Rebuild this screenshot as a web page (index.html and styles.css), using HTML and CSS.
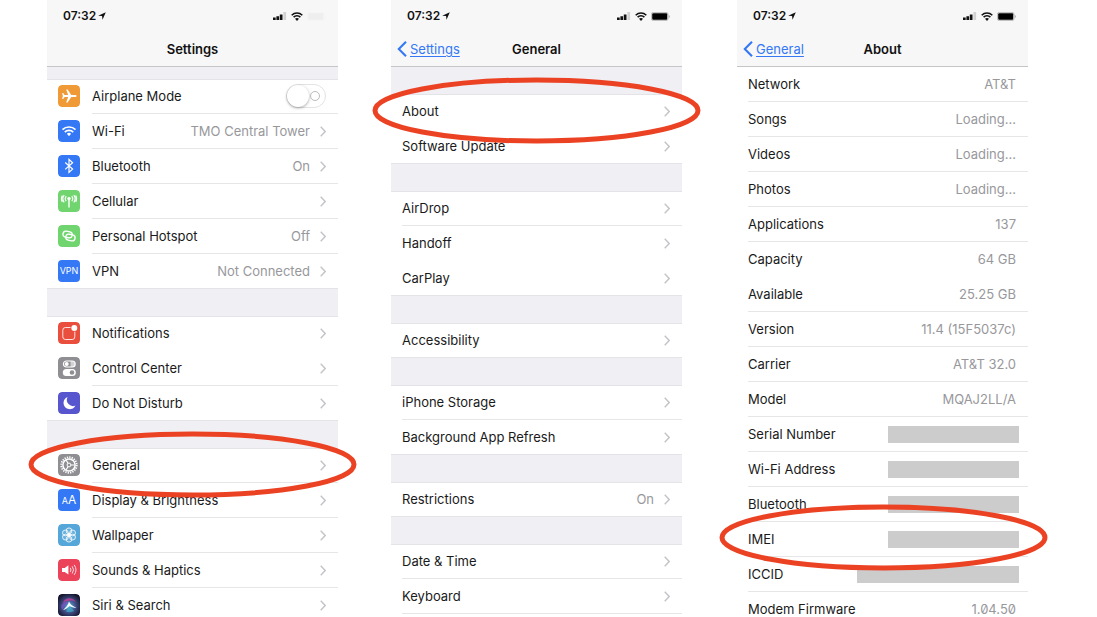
FILE: index.html
```html
<!DOCTYPE html>
<html lang="en">
<head>
<meta charset="utf-8">
<meta name="viewport" content="width=device-width, initial-scale=1">
<title>Settings – General – About</title>
<link rel="stylesheet" href="styles.css">
</head>
<body>
<svg class="defs" aria-hidden="true">
  <symbol id="chevron" viewBox="0 0 6 11"><path d="M.7.7 5.2 5.5.7 10.3" fill="none" stroke="#c4c4c8" stroke-width="1.4"/></symbol>
  <symbol id="back" viewBox="0 0 10 16"><path d="M9 .8 1.8 8 9 15.2" fill="none" stroke="#3478f6" stroke-width="2.1"/></symbol>
  <symbol id="arrow" viewBox="0 0 8 8"><path d="M7.8.3 4.5 7.7 4.1 4.1.2 3.8z" fill="#111"/></symbol>
  <symbol id="signal" viewBox="0 0 14 8"><path d="M0 5.5h2.7V8H0zM3.400 4.200h2.700V8H3.400zM6.800 2.400h2.700V8H6.800z" fill="#111"/><path d="M10.400 0h2.700v8h-2.700z" fill="#d2d2d2"/></symbol>
  <symbol id="wifi" viewBox="0 0 12 9"><path d="M.7 3.2a7.6 7.6 0 0 1 10.6 0M2.6 5.2a4.900 4.900 0 0 1 6.800 0" fill="none" stroke="currentColor" stroke-width="1.600"/><path d="M6 9 4 6.800a3 3 0 0 1 4 0z" fill="currentColor"/></symbol>
  <symbol id="battery" viewBox="0 0 19 9"><rect x=".4" y=".4" width="16.600" height="8.200" rx="2" fill="none" stroke="#aaa" stroke-width=".8"/><rect x="1.200" y="1.200" width="15" height="6.600" rx="1" fill="#000"/><path d="M17.800 3v3q1-.4 1-1.500t-1-1.500" fill="#aaa"/></symbol>
</svg>
<main class="screens">

  <section class="phone">
    <header class="bar">
      <div class="status">
        <span>07:32</span><svg class="i-arrow"><use href="#arrow"/></svg>
        <span class="indicators"><svg class="i-signal"><use href="#signal"/></svg><svg class="i-wifi"><use href="#wifi"/></svg><svg class="i-battery dim"><use href="#battery"/></svg></span>
      </div>
      <div class="nav"><h1>Settings</h1></div>
    </header>
    <div class="list">
      <div class="group first-short">
        <div class="row">
          <svg class="icon" viewBox="0 0 22 22"><rect width="22" height="22" rx="4" fill="#f09a37"/><path d="M18.600 11c0 .8-.8 1.100-1.800 1.100h-3.500L9.600 17.600H8.200l1.900-5.500H6.600l-1.400 1.800H4.100l.8-2.900-.8-2.900h1.100l1.400 1.800h3.500L8.200 4.400h1.400l3.700 5.500h3.500c1 0 1.800.3 1.800 1.100z" fill="#fff"/></svg>
          <div class="cell"><label for="airplane">Airplane Mode</label><input class="toggle" type="checkbox" id="airplane"></div>
        </div>
        <a class="row" href="#wifi-settings">
          <svg class="icon" viewBox="0 0 22 22"><rect width="22" height="22" rx="4" fill="#3478f6"/><path d="M4.500 9.700a9.200 9.200 0 0 1 13 0M6.800 12.100a6 6 0 0 1 8.400 0" fill="none" stroke="#fff" stroke-width="1.700"/><path d="m11 16.300-2.100-2.500a3 3 0 0 1 4.200 0z" fill="#fff"/></svg>
          <span class="cell"><span>Wi-Fi</span><span class="value">TMO Central Tower</span><svg class="chev"><use href="#chevron"/></svg></span>
        </a>
        <a class="row" href="#bluetooth">
          <svg class="icon" viewBox="0 0 22 22"><rect width="22" height="22" rx="4" fill="#3478f6"/><path d="m7.200 7.500 7.400 6.600-3.600 3.300V4.400l3.600 3.300-7.400 6.700" fill="none" stroke="#fff" stroke-width="1.200"/></svg>
          <span class="cell"><span>Bluetooth</span><span class="value">On</span><svg class="chev"><use href="#chevron"/></svg></span>
        </a>
        <a class="row" href="#cellular">
          <svg class="icon" viewBox="0 0 22 22"><rect width="22" height="22" rx="4" fill="#71d56f"/><g fill="none" stroke="#fff" stroke-width="1.100"><path d="M11 9.500v8" stroke-width="1.400"/><path d="M8.200 6.200a4 4 0 0 0 0 5M6.200 5a6.200 6.200 0 0 0 0 7.400M4.300 5.400a7 7 0 0 0 0 6.600M13.800 6.200a4 4 0 0 1 0 5M15.800 5a6.200 6.200 0 0 1 0 7.400M17.700 5.400a7 7 0 0 1 0 6.600"/></g><circle cx="11" cy="8.600" r="1.700" fill="#fff"/></svg>
          <span class="cell"><span>Cellular</span><span class="value"></span><svg class="chev"><use href="#chevron"/></svg></span>
        </a>
        <a class="row" href="#hotspot">
          <svg class="icon" viewBox="0 0 22 22"><rect width="22" height="22" rx="4" fill="#71d56f"/><g fill="none" stroke="#fff" stroke-width="1.300" transform="rotate(12 11 11)"><rect x="4.600" y="6.800" width="9.400" height="6" rx="3"/><rect x="8" y="9.200" width="9.400" height="6" rx="3"/></g></svg>
          <span class="cell"><span>Personal Hotspot</span><span class="value">Off</span><svg class="chev"><use href="#chevron"/></svg></span>
        </a>
        <a class="row" href="#vpn">
          <span class="icon tile-text vpn" aria-hidden="true">VPN</span>
          <span class="cell"><span>VPN</span><span class="value">Not Connected</span><svg class="chev"><use href="#chevron"/></svg></span>
        </a>
      </div>
      <div class="group">
        <a class="row faint" href="#notifications">
          <svg class="icon" viewBox="0 0 22 22"><rect width="22" height="22" rx="4" fill="#ea4e3d"/><rect x="4.800" y="5.500" width="12" height="12" rx="2.600" fill="none" stroke="#fff" stroke-opacity=".85"/><circle cx="16.300" cy="6" r="3.800" fill="#ea4e3d"/><circle cx="16.300" cy="6" r="3" fill="#fff"/></svg>
          <span class="cell"><span>Notifications</span><span class="value"></span><svg class="chev"><use href="#chevron"/></svg></span>
        </a>
        <a class="row" href="#control-center">
          <svg class="icon" viewBox="0 0 22 22"><rect width="22" height="22" rx="4" fill="#8e8e93"/><rect x="5.400" y="4" width="11.800" height="6" rx="3" fill="none" stroke="#fff" stroke-width="1.200"/><circle cx="8.700" cy="7" r="2" fill="#fff"/><path d="M12.500 4h1.700a3 3 0 0 1 0 6h-1.700z" fill="#fff" opacity=".6"/><rect x="4.800" y="12" width="13" height="7" rx="3.500" fill="#fff"/><circle cx="14" cy="15.500" r="2.300" fill="#8e8e93"/></svg>
          <span class="cell"><span>Control Center</span><span class="value"></span><svg class="chev"><use href="#chevron"/></svg></span>
        </a>
        <a class="row" href="#dnd">
          <svg class="icon" viewBox="0 0 22 22"><rect width="22" height="22" rx="4" fill="#5756ce"/><path d="M9.500 5a6.300 6.300 0 0 0 8 8.600A6.300 6.300 0 1 1 9.500 5z" fill="#fff"/></svg>
          <span class="cell"><span>Do Not Disturb</span><span class="value"></span><svg class="chev"><use href="#chevron"/></svg></span>
        </a>
      </div>
      <div class="group">
        <a class="row marked" href="#general">
          <svg class="icon" viewBox="0 0 22 22"><rect width="22" height="22" rx="4" fill="#8e8e93"/><circle cx="11" cy="11" r="7.700" fill="none" stroke="#fff" stroke-width="1.900" stroke-dasharray="1.300 1.119"/><circle cx="11" cy="11" r="6.100" fill="none" stroke="#fff" stroke-width="1.500"/><path d="M11 11h5.500M11 11l-2.800-4.800M11 11l-2.800 4.800" stroke="#fff" stroke-width="1.200"/><circle cx="11" cy="11" r="1.900" fill="#8e8e93" stroke="#fff"/></svg>
          <span class="cell"><span>General</span><span class="value"></span><svg class="chev"><use href="#chevron"/></svg></span>
          <svg class="ring" aria-hidden="true"><ellipse cx="50%" cy="50%"/></svg>
        </a>
        <a class="row" href="#display">
          <span class="icon tile-text display" aria-hidden="true"><small>A</small>A</span>
          <span class="cell"><span>Display &amp; Brightness</span><span class="value"></span><svg class="chev"><use href="#chevron"/></svg></span>
        </a>
        <a class="row" href="#wallpaper">
          <svg class="icon" viewBox="0 0 22 22"><rect width="22" height="22" rx="4" fill="#55a6d9"/><g fill="#fff" fill-opacity=".12" stroke="#fff" stroke-width=".8"><circle cx="11" cy="6.800" r="2.900"/><circle cx="14.600" cy="8.900" r="2.900"/><circle cx="14.600" cy="13.100" r="2.900"/><circle cx="11" cy="15.200" r="2.900"/><circle cx="7.400" cy="13.100" r="2.900"/><circle cx="7.400" cy="8.900" r="2.900"/></g><circle cx="11" cy="11" r="1.700" fill="#fff"/></svg>
          <span class="cell"><span>Wallpaper</span><span class="value"></span><svg class="chev"><use href="#chevron"/></svg></span>
        </a>
        <a class="row" href="#sounds">
          <svg class="icon" viewBox="0 0 22 22"><rect width="22" height="22" rx="4" fill="#eb445a"/><path d="M4 9h2.700L10.400 6.200v9.400L6.700 13H4z" fill="#fff"/><path d="M12.300 8.900a3.500 3.500 0 0 1 0 4M14.200 7.300a6 6 0 0 1 0 7.200M16.200 5.900a8.600 8.600 0 0 1 0 10" fill="none" stroke="#fff" stroke-opacity=".8"/></svg>
          <span class="cell"><span>Sounds &amp; Haptics</span><span class="value"></span><svg class="chev"><use href="#chevron"/></svg></span>
        </a>
        <a class="row" href="#siri">
          <svg class="icon" viewBox="0 0 22 22"><defs><radialGradient id="siri-g" cx=".5" cy=".55" r=".6"><stop offset="0" stop-color="#5ab4d6"/><stop offset=".45" stop-color="#45558f"/><stop offset="1" stop-color="#15142c"/></radialGradient></defs><rect width="22" height="22" rx="4" fill="url(#siri-g)"/><path d="M5 9c1-5 9-7 13-1-4-2-8-2-13 1z" fill="#c33f9b" opacity=".8"/><path d="M3 12c2-4 5-5 8-3-3 0-4 4-7 7z" fill="#7b54c8" opacity=".7"/><path d="M11 7.500c1 3 4 4.500 7.500 6.500-3-.5-5-.8-7-2-2 2-4 3.500-6.500 4 3-2.500 5-5 6-8.500z" fill="#f1fcff"/><path d="M10 13c2 0 5 2 6 4-3 1.500-6 1.500-8 .5z" fill="#3bbdcc" opacity=".55"/></svg>
          <span class="cell"><span>Siri &amp; Search</span><span class="value"></span><svg class="chev"><use href="#chevron"/></svg></span>
        </a>
      </div>
    </div>
  </section>

  <section class="phone">
    <header class="bar">
      <div class="status">
        <span>07:32</span><svg class="i-arrow"><use href="#arrow"/></svg>
        <span class="indicators"><svg class="i-signal"><use href="#signal"/></svg><svg class="i-wifi"><use href="#wifi"/></svg><svg class="i-battery"><use href="#battery"/></svg></span>
      </div>
      <div class="nav"><a class="back" href="#settings"><svg class="i-back"><use href="#back"/></svg><span>Settings</span></a><h1>General</h1></div>
    </header>
    <div class="list">
      <div class="group">
        <a class="row marked faint" href="#about"><span class="cell"><span>About</span><span class="value"></span><svg class="chev"><use href="#chevron"/></svg></span><svg class="ring" aria-hidden="true"><ellipse cx="50%" cy="50%"/></svg></a>
        <a class="row" href="#update"><span class="cell"><span>Software Update</span><span class="value"></span><svg class="chev"><use href="#chevron"/></svg></span></a>
      </div>
      <div class="group">
        <a class="row" href="#airdrop"><span class="cell"><span>AirDrop</span><span class="value"></span><svg class="chev"><use href="#chevron"/></svg></span></a>
        <a class="row faint" href="#handoff"><span class="cell"><span>Handoff</span><span class="value"></span><svg class="chev"><use href="#chevron"/></svg></span></a>
        <a class="row" href="#carplay"><span class="cell"><span>CarPlay</span><span class="value"></span><svg class="chev"><use href="#chevron"/></svg></span></a>
      </div>
      <div class="group">
        <a class="row" href="#accessibility"><span class="cell"><span>Accessibility</span><span class="value"></span><svg class="chev"><use href="#chevron"/></svg></span></a>
      </div>
      <div class="group">
        <a class="row" href="#storage"><span class="cell"><span>iPhone Storage</span><span class="value"></span><svg class="chev"><use href="#chevron"/></svg></span></a>
        <a class="row" href="#refresh"><span class="cell"><span>Background App Refresh</span><span class="value"></span><svg class="chev"><use href="#chevron"/></svg></span></a>
      </div>
      <div class="group">
        <a class="row" href="#restrictions"><span class="cell"><span>Restrictions</span><span class="value">On</span><svg class="chev"><use href="#chevron"/></svg></span></a>
      </div>
      <div class="group">
        <a class="row" href="#date"><span class="cell"><span>Date &amp; Time</span><span class="value"></span><svg class="chev"><use href="#chevron"/></svg></span></a>
        <a class="row" href="#keyboard"><span class="cell"><span>Keyboard</span><span class="value"></span><svg class="chev"><use href="#chevron"/></svg></span></a>
        <div class="row"></div>
      </div>
    </div>
  </section>

  <section class="phone">
    <header class="bar">
      <div class="status">
        <span>07:32</span><svg class="i-arrow"><use href="#arrow"/></svg>
        <span class="indicators"><svg class="i-signal"><use href="#signal"/></svg><svg class="i-wifi"><use href="#wifi"/></svg><svg class="i-battery"><use href="#battery"/></svg></span>
      </div>
      <div class="nav"><a class="back" href="#general"><svg class="i-back"><use href="#back"/></svg><span>General</span></a><h1>About</h1></div>
    </header>
    <dl class="facts">
      <div class="row"><div class="cell"><dt>Network</dt><dd>AT&amp;T</dd></div></div>
      <div class="row"><div class="cell"><dt>Songs</dt><dd>Loading...</dd></div></div>
      <div class="row"><div class="cell"><dt>Videos</dt><dd>Loading...</dd></div></div>
      <div class="row"><div class="cell"><dt>Photos</dt><dd>Loading...</dd></div></div>
      <div class="row"><div class="cell"><dt>Applications</dt><dd>137</dd></div></div>
      <div class="row faint"><div class="cell"><dt>Capacity</dt><dd>64 GB</dd></div></div>
      <div class="row"><div class="cell"><dt>Available</dt><dd>25.25 GB</dd></div></div>
      <div class="row"><div class="cell"><dt>Version</dt><dd>11.4 (15F5037c)</dd></div></div>
      <div class="row"><div class="cell"><dt>Carrier</dt><dd>AT&amp;T 32.0</dd></div></div>
      <div class="row"><div class="cell"><dt>Model</dt><dd>MQAJ2LL/A</dd></div></div>
      <div class="row"><div class="cell"><dt>Serial Number</dt><dd class="redacted"></dd></div></div>
      <div class="row"><div class="cell"><dt>Wi-Fi Address</dt><dd class="redacted"></dd></div></div>
      <div class="row"><div class="cell"><dt>Bluetooth</dt><dd class="redacted"></dd></div></div>
      <div class="row marked"><div class="cell"><dt>IMEI</dt><dd class="redacted"><svg class="ring" aria-hidden="true"><ellipse cx="50%" cy="50%"/></svg></dd></div></div>
      <div class="row"><div class="cell"><dt>ICCID</dt><dd class="redacted wide"></dd></div></div>
      <div class="row"><div class="cell"><dt>Modem Firmware</dt><dd class="slashed">1.04.50</dd></div></div>
    </dl>
  </section>

</main>
</body>
</html>
```
FILE: styles.css
```css
* { box-sizing: border-box; }

body {
  margin: 0;
  background: #fff;
  color: #1a1a1a;
  font: 13px/18px Inter, "Liberation Sans", sans-serif;
}

h1, dl, dd { margin: 0; }
a { color: inherit; text-decoration: none; }
svg { display: block; flex: none; }
.defs { position: absolute; width: 0; height: 0; }

.screens {
  display: flex;
  gap: 53px;
  height: 100vh;
  padding: 0 69px 0 47px;
  overflow: hidden;
}

.phone { flex: 1; min-width: 0; }
.phone:last-child { margin-left: 2px; }

/* status and title bar */
.bar {
  background: #f7f7f7;
  border-bottom: 1px solid #c5c5c8;
}
.status {
  display: flex;
  align-items: center;
  gap: 2px;
  height: 32px;
  padding: 0 12px 0 16px;
  color: #111;
  font-size: 12px;
  font-weight: 600;
}
.indicators {
  display: flex;
  align-items: center;
  gap: 4px;
  margin-left: auto;
}
.i-arrow { width: 8px; height: 8px; }
.i-signal { width: 14px; height: 8px; }
.i-wifi { width: 12px; height: 9px; }
.i-battery { width: 19px; height: 9px; }
.i-battery.dim { opacity: .03; }

.nav {
  display: grid;
  grid-template-columns: 1fr auto 1fr;
  align-items: center;
  height: 34px;
  padding: 0 6px;
}
.nav h1 {
  grid-column: 2;
  color: #111;
  font-size: 13px;
  line-height: 18px;
  font-weight: 600;
}
.back {
  display: flex;
  align-items: center;
  gap: 3px;
  color: #3478f6;
}
.back span { text-decoration: underline; text-underline-offset: 2px; }
.i-back { width: 10px; height: 16px; }

/* grouped rows */
.group {
  border-top: 27px solid #efeff4;
  background: #fff;
  box-shadow: inset 0 1px #e4e4e8, inset 0 -1px #e4e4e8;
}
.group.first-short { border-top-width: 12px; }
.row {
  display: flex;
  align-items: center;
  gap: 12px;
  height: 35px;
  padding-left: 11px;
}
.cell {
  display: flex;
  flex: 1;
  align-items: center;
  align-self: stretch;
  gap: 10px;
  min-width: 0;
  padding-right: 12px;
  border-bottom: 1px solid #e6e6e8;
  white-space: nowrap;
}
.group .row:last-child .cell,
.faint .cell { border-bottom-color: transparent; }
.value {
  margin-left: auto;
  color: #98989c;
}
.chev { width: 6px; height: 11px; }

.icon {
  width: 22px;
  height: 22px;
  flex: none;
  margin-bottom: 2px;
  border-radius: 4px;
}
.tile-text {
  display: flex;
  align-items: center;
  justify-content: center;
  background: #3478f6;
  color: #fff;
}
.vpn { font-size: 9px; }
.display { align-items: baseline; font-size: 12px; line-height: 22px; }
.display small { font-size: 9px; }

.toggle {
  appearance: none;
  display: flex;
  align-items: center;
  justify-content: space-between;
  width: 40px;
  height: 24px;
  margin: 0 0 0 auto;
  padding-right: 5px;
  border: 1px solid #e3e3e3;
  border-radius: 12px;
  background: #fff;
}
.toggle::before {
  content: "";
  width: 22px;
  height: 22px;
  border-radius: 50%;
  background: #fff;
  box-shadow: 0 1px 3px rgba(0, 0, 0, .35);
}
.toggle::after {
  content: "";
  width: 8px;
  height: 8px;
  border: 1px solid #bbb;
  border-radius: 50%;
}

/* about list */
.facts dd { margin-left: auto; color: #98989c; }
.facts .redacted {
  width: 131px;
  height: 17px;
  margin-right: -3px;
  background: #cccccd;
}
.facts .redacted.wide { width: 162px; }
.slashed { font-feature-settings: "zero"; }

/* highlight ring around a row */
.marked { position: relative; }
.ring {
  position: absolute;
  z-index: 1;
  top: -17px;
  left: -19px;
  width: calc(100% + 38px);
  height: 67px;
  overflow: visible;
  pointer-events: none;
}
.ring ellipse {
  rx: calc(50% - 3px);
  ry: calc(50% - 3px);
  fill: none;
  stroke: #ec4224;
  stroke-width: 5px;
}
.facts .ring { top: -18px; left: -18px; }
```
